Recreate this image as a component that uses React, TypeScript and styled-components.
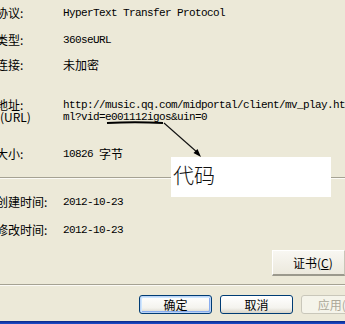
import React from 'react';
import styled, { createGlobalStyle } from 'styled-components';

const Global = createGlobalStyle`
  html, body {
    margin: 0;
    padding: 0;
    background: #ece9d8;
  }
`

const Window = styled.div`
  position: relative;
  width: 345px;
  height: 324px;
  overflow: hidden;
  background: #ece9d8;
  color: #000;
  font-family: "Noto Sans CJK SC", "Liberation Sans", sans-serif;
  font-size: 12px;
  display: flex;
  flex-direction: column;
`

const Row = styled.div<{ $top: number; $lines?: number }>`
  display: grid;
  grid-template-columns: 67px 1fr;
  margin-left: -4px;
  margin-top: ${p => p.$top}px;
  height: ${p => (p.$lines ?? 1) * (p.$lines ? 12 : 14)}px;
  line-height: ${p => (p.$lines ? 12 : 14)}px;
  white-space: nowrap;
  flex-shrink: 0;
`

const Label = styled.div`
  font-family: "Noto Sans CJK SC", sans-serif;
  font-size: 12px;
`

const Value = styled.div`
  font-size: 12px;
  overflow: hidden;
`

const Line = styled.div<{ $indent?: number }>`
  height: 12px;
  line-height: 12px;
  padding-left: ${p => p.$indent ?? 0}px;
`

const Mono = styled.span`
  font-family: "Liberation Mono", "DejaVu Sans Mono", monospace;
  font-size: 11px;
  letter-spacing: -0.6px;
  vertical-align: top;
`

const Cjk = styled.span`
  font-family: "Noto Sans CJK SC", sans-serif;
  font-size: 12px;
  vertical-align: top;
`

const Separator = styled.div<{ $top: number }>`
  margin-top: ${p => p.$top}px;
  height: 1px;
  background: #a5a293;
  border-bottom: 1px solid #fbfaf5;
  flex-shrink: 0;
`

const ButtonRow = styled.div<{ $top: number; $left: number }>`
  display: flex;
  gap: 8px;
  margin-top: ${p => p.$top}px;
  padding-left: ${p => p.$left}px;
  flex-shrink: 0;
`

const Button = styled.div<{ $variant?: 'default' | 'disabled' }>`
  box-sizing: border-box;
  width: 73px;
  height: 19px;
  flex-shrink: 0;
  display: flex;
  align-items: center;
  justify-content: center;
  font-family: "Noto Sans CJK SC", sans-serif;
  font-size: 12px;
  line-height: 14px;
  border-radius: 3px;
  border: 1px solid ${p => (p.$variant === 'disabled' ? '#c9c7ba' : '#003c74')};
  color: ${p => (p.$variant === 'disabled' ? '#aca899' : '#000')};
  background: ${p =>
    p.$variant === 'disabled'
      ? '#f5f4ea'
      : 'linear-gradient(#ffffff, #f4f3ee 70%, #d8d4c8)'};
  box-shadow: ${p =>
    p.$variant === 'default'
      ? 'inset 0 0 0 1px #bcd4f6, inset 1px 1px 0 1px #cee7ff, inset -1px -1px 0 1px #89adf0'
      : 'none'};
`

const CertButton = styled.div`
  box-sizing: border-box;
  width: 80px;
  height: 26px;
  display: flex;
  align-items: center;
  padding-left: 20px;
  font-family: "Noto Sans CJK SC", sans-serif;
  font-size: 12px;
  line-height: 14px;
  background: linear-gradient(#f8f7f2, #ece9dd);
  border-top: 1px solid #fff;
  border-left: 1px solid #fff;
  border-bottom: 2px solid #9b998d;
  border-right: 1px solid #c8c5b8;
`

const Hotkey = styled.span`
  text-decoration: underline;
`

const TaskBar = styled.div`
  margin-top: auto;
  height: 3px;
  background: linear-gradient(#0a2784, #1d4fd0);
  flex-shrink: 0;
`

const Note = styled.div`
  position: absolute;
  left: 171px;
  top: 157px;
  width: 160px;
  height: 40px;
  background: #fff;
  box-sizing: border-box;
  padding: 4px 0 0 2px;
  font-family: "Noto Sans CJK SC", sans-serif;
  font-size: 21px;
  font-weight: 300;
  line-height: 26px;
  color: #111;
`

const Marks = styled.svg`
  position: absolute;
  left: 0;
  top: 0;
  pointer-events: none;
`

const App = () => {
  return (
    <>
      <Global />
      <Window>
        <Row $top={6}>
          <Label>协议:</Label>
          <Value><Mono>HyperText Transfer Protocol</Mono></Value>
        </Row>
        <Row $top={13}>
          <Label>类型:</Label>
          <Value><Mono>360seURL</Mono></Value>
        </Row>
        <Row $top={11}>
          <Label>连接:</Label>
          <Value><Cjk>未加密</Cjk></Value>
        </Row>
        <Row $top={27} $lines={2}>
          <Label>
            <Line>地址:</Line>
            <Line $indent={4}>(URL)</Line>
          </Label>
          <Value>
            <Line><Mono>http://music.qq.com/midportal/client/mv_play.ht</Mono></Line>
            <Line><Mono>ml?vid=e001112igos&amp;uin=0</Mono></Line>
          </Value>
        </Row>
        <Row $top={24}>
          <Label>大小:</Label>
          <Value><Mono>10826 </Mono><Cjk>字节</Cjk></Value>
        </Row>
        <Separator $top={16} />
        <Row $top={16}>
          <Label>创建时间:</Label>
          <Value><Mono>2012-10-23</Mono></Value>
        </Row>
        <Row $top={14}>
          <Label>修改时间:</Label>
          <Value><Mono>2012-10-23</Mono></Value>
        </Row>
        <ButtonRow $top={13} $left={272}>
          <CertButton>证书(<Hotkey>C</Hotkey>)</CertButton>
        </ButtonRow>
        <Separator $top={8} />
        <ButtonRow $top={9} $left={139}>
          <Button $variant="default">确定</Button>
          <Button>取消</Button>
          <Button $variant="disabled">应用(A)</Button>
        </ButtonRow>
        <TaskBar />

        <Note>代码</Note>
        <Marks width={345} height={324} viewBox="0 0 345 324">
          <path d="M107 123 Q135 121.5 163 123" stroke="#000" strokeWidth={2} fill="none" />
          <line x1={164} y1={123} x2={198} y2={153} stroke="#111" strokeWidth={1.1} />
          <path d="M201 157 L193.5 153 L197.5 149 Z" fill="#000" />
        </Marks>
      </Window>
    </>
  );
};

export default App;
